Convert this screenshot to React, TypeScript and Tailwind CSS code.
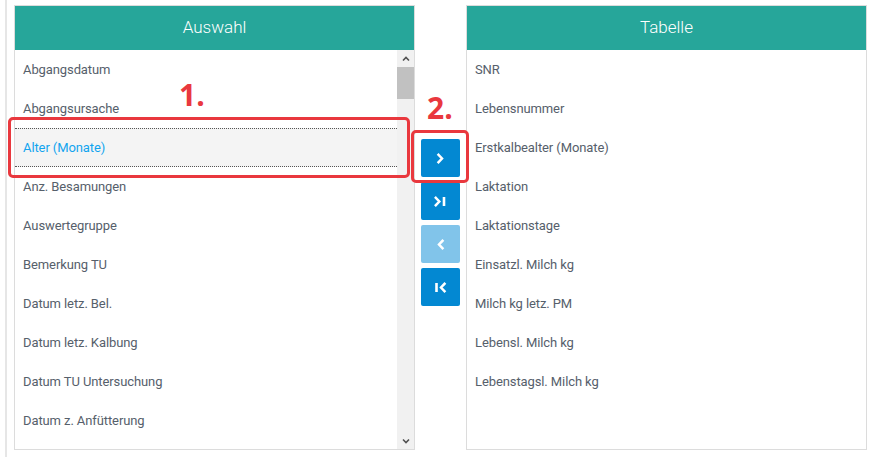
import React from 'react';

const auswahl = [
  'Abgangsdatum',
  'Abgangsursache',
  'Alter (Monate)',
  'Anz. Besamungen',
  'Auswertegruppe',
  'Bemerkung TU',
  'Datum letz. Bel.',
  'Datum letz. Kalbung',
  'Datum TU Untersuchung',
  'Datum z. Anfütterung',
];

const tabelle = [
  'SNR',
  'Lebensnummer',
  'Erstkalbealter (Monate)',
  'Laktation',
  'Laktationstage',
  'Einsatzl. Milch kg',
  'Milch kg letz. PM',
  'Lebensl. Milch kg',
  'Lebenstagsl. Milch kg',
];

const SELECTED = 'Alter (Monate)';

function Chevron({ dir }: { dir: 'left' | 'right' }) {
  return (
    <svg width="9" height="11" viewBox="0 0 9 11" fill="none">
      <path
        d={dir === 'right' ? 'M2.5 1.8 L6 5.5 L2.5 9.2' : 'M6.5 1.8 L3 5.5 L6.5 9.2'}
        stroke="white"
        strokeWidth="2.5"
        strokeLinecap="square"
      />
    </svg>
  );
}

function MoveButton({ kind, disabled }: { kind: 'one' | 'all' | 'back' | 'backAll'; disabled?: boolean }) {
  return (
    <button
      className={`flex h-[38px] w-[39px] items-center justify-center rounded-[2px] ${
        disabled ? 'bg-[#81c4ea]' : 'bg-[#0388d2]'
      }`}
    >
      {kind === 'one' && <Chevron dir="right" />}
      {kind === 'back' && <Chevron dir="left" />}
      {kind === 'all' && (
        <svg width="13" height="11" viewBox="0 0 13 11" fill="none">
          <path d="M1.8 1.8 L5.3 5.5 L1.8 9.2" stroke="white" strokeWidth="2.5" strokeLinecap="square" />
          <path d="M10 1 L10 10" stroke="white" strokeWidth="2.6" />
        </svg>
      )}
      {kind === 'backAll' && (
        <svg width="13" height="11" viewBox="0 0 13 11" fill="none">
          <path d="M2.5 1 L2.5 10" stroke="white" strokeWidth="2.6" />
          <path d="M10.5 1.8 L7 5.5 L10.5 9.2" stroke="white" strokeWidth="2.5" strokeLinecap="square" />
        </svg>
      )}
    </button>
  );
}

function Row({ label, selected }: { label: string; selected?: boolean }) {
  return (
    <div
      className={`flex h-[39px] shrink-0 items-center pl-[8px] text-[13px] tracking-[-0.1px] ${
        selected
          ? 'border-y border-dotted border-[#555] bg-[#f4f4f4] text-[#12a4ef]'
          : 'text-[#56606b]'
      }`}
    >
      {label}
    </div>
  );
}

function Panel({ title, items, scroll }: { title: string; items: string[]; scroll?: boolean }) {
  return (
    <div className="flex h-[445px] w-[401px] shrink-0 flex-col border border-[#dcdcdc] bg-white">
      <div className="flex h-[44px] shrink-0 items-center justify-center bg-[#26a69a] text-[17px] font-light text-white">
        {title}
      </div>
      <div className="flex min-h-0 flex-1">
        <div className="flex flex-1 flex-col overflow-hidden">
          {items.map((it) => (
            <Row key={it} label={it} selected={it === SELECTED} />
          ))}
        </div>
        {scroll && (
          <div className="flex w-[17px] flex-col bg-[#f1f1f1]">
            <div className="flex h-[17px] items-center justify-center">
              <svg width="8" height="6" viewBox="0 0 8 6" fill="none">
                <path d="M1 4.5 L4 1.5 L7 4.5" stroke="#505050" strokeWidth="1.6" />
              </svg>
            </div>
            <div className="h-[32px] bg-[#c1c1c1]" />
            <div className="flex-1" />
            <div className="flex h-[17px] items-center justify-center">
              <svg width="8" height="6" viewBox="0 0 8 6" fill="none">
                <path d="M1 1.5 L4 4.5 L7 1.5" stroke="#505050" strokeWidth="1.6" />
              </svg>
            </div>
          </div>
        )}
      </div>
    </div>
  );
}

export default function App() {
  return (
    <div
      className="relative flex h-[457px] w-[877px] bg-white pl-[5px] pt-[5px]"
      style={{ fontFamily: 'Roboto, "Liberation Sans", sans-serif' }}
    >
      <div className="-mt-[5px] mr-[6px] h-[457px] w-[3px] shrink-0 border-l-2 border-[#e6e6e6]" />
      <Panel title="Auswahl" items={auswahl} scroll />
      <div className="ml-[6px] mr-[6px] flex flex-col gap-[5px] pt-[134px]">
        <MoveButton kind="one" />
        <MoveButton kind="all" />
        <MoveButton kind="back" disabled />
        <MoveButton kind="backAll" />
      </div>
      <Panel title="Tabelle" items={tabelle} />

      {/* annotations */}
      <div className="pointer-events-none absolute left-[8px] top-[117px] h-[61px] w-[402px] rounded-[5px] border-[3px] border-[#e9383e]" />
      <div className="pointer-events-none absolute left-[411px] top-[130px] h-[53px] w-[58px] rounded-[5px] border-[3px] border-[#e9383e]" />
      <div
        className="absolute left-[179px] top-[80px] text-[30px] font-bold leading-none text-[#e9383e]"
        style={{ fontFamily: '"Open Sans", sans-serif' }}
      >
        1.
      </div>
      <div
        className="absolute left-[427px] top-[93px] text-[30px] font-bold leading-none text-[#e9383e]"
        style={{ fontFamily: '"Open Sans", sans-serif' }}
      >
        2.
      </div>
    </div>
  );
}
